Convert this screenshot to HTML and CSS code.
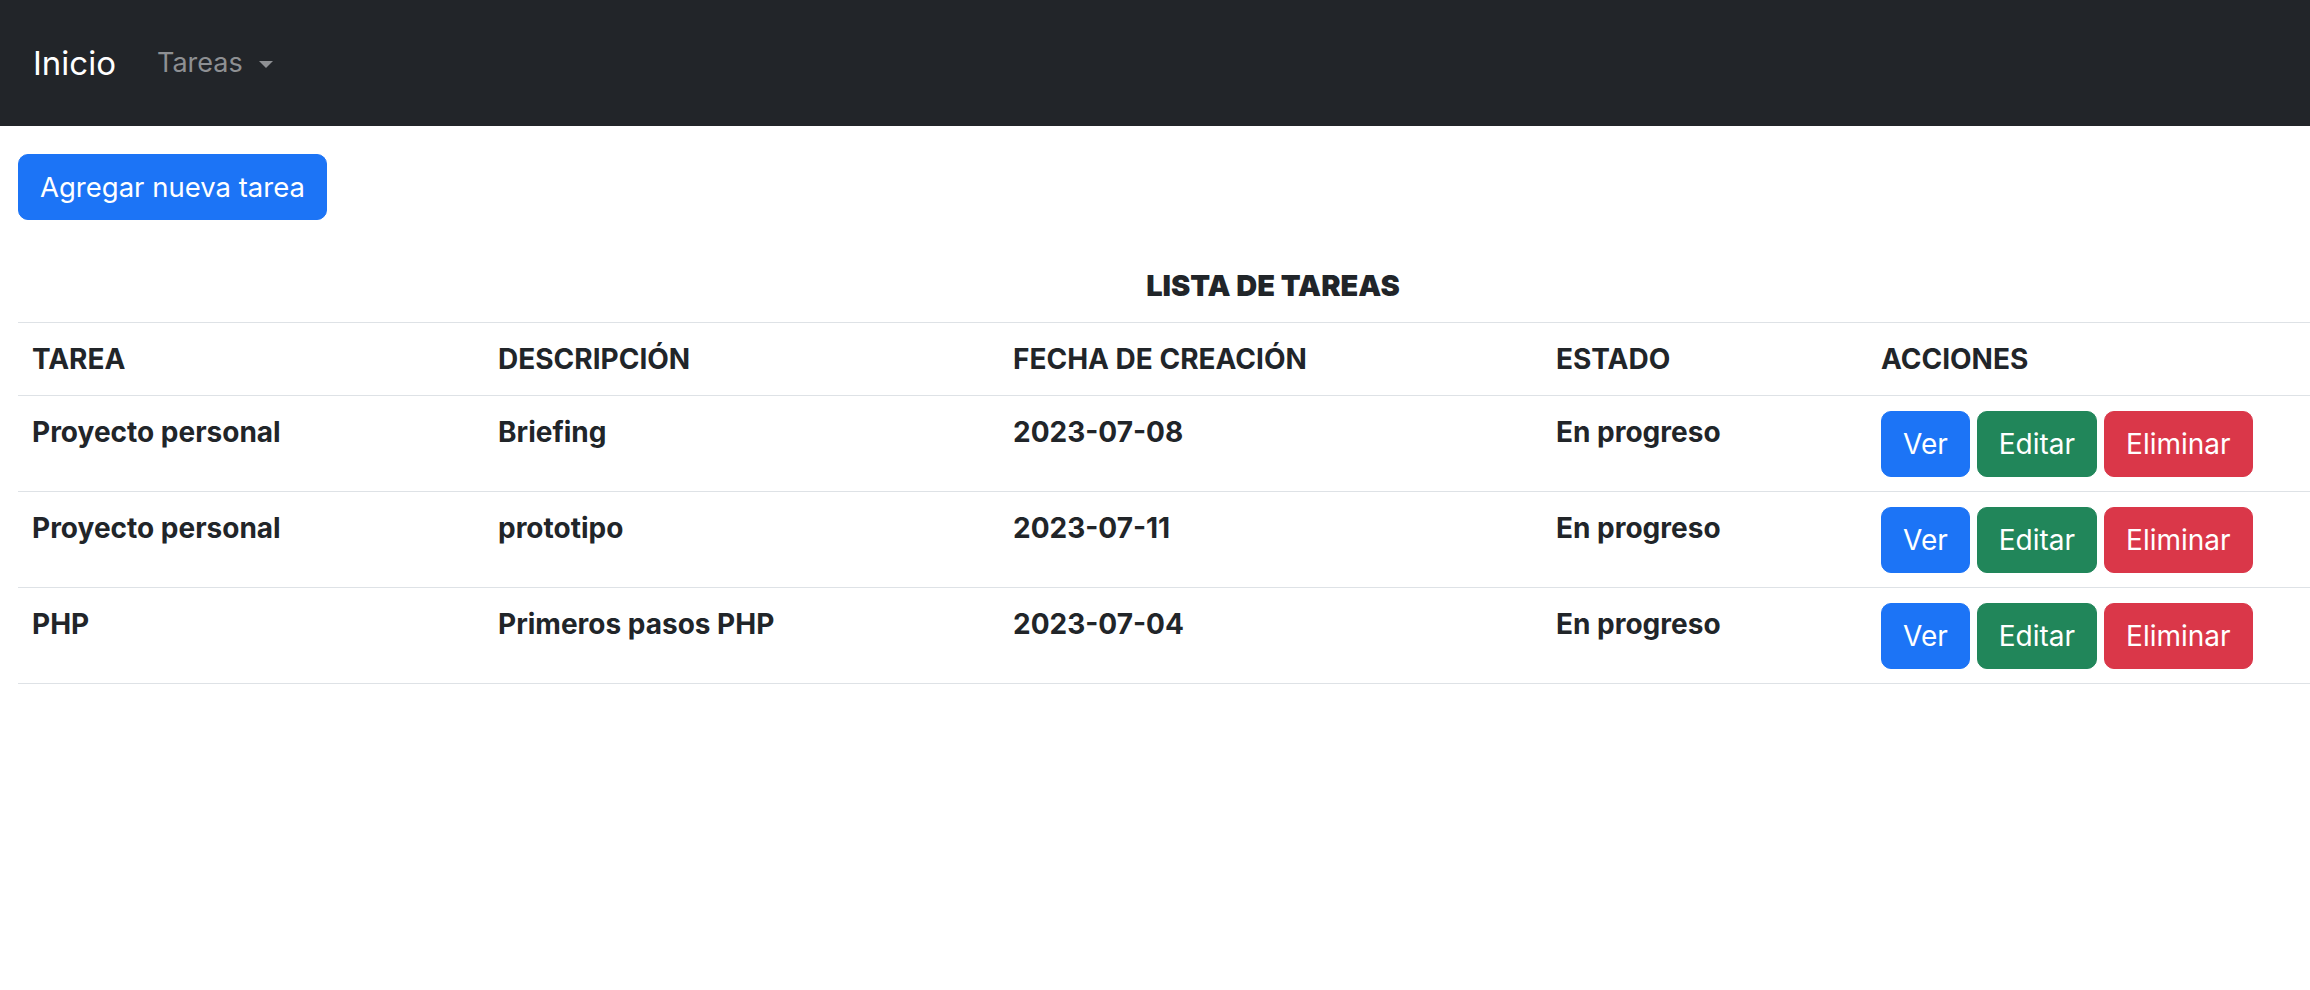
FILE: index.html
```html
<!DOCTYPE html>
<html lang="es">
<head>
<meta charset="utf-8">
<title>Lista de tareas</title>
<link rel="stylesheet" href="styles.css">
</head>
<body>
<nav class="navbar">
  <a class="brand" href="#">Inicio</a>
  <a class="nav-link dropdown" href="#">Tareas<span class="caret"></span></a>
</nav>
<main class="container">
  <a class="btn btn-primary btn-add" href="#">Agregar nueva tarea</a>
  <table class="table">
    <colgroup>
      <col class="c1"><col class="c2"><col class="c3"><col class="c4"><col class="c5">
    </colgroup>
    <thead>
      <tr><th class="caption" colspan="5">LISTA DE TAREAS</th></tr>
      <tr>
        <th>TAREA</th>
        <th>DESCRIPCIÓN</th>
        <th>FECHA DE CREACIÓN</th>
        <th>ESTADO</th>
        <th>ACCIONES</th>
      </tr>
    </thead>
    <tbody>
      <tr>
        <td>Proyecto personal</td>
        <td>Briefing</td>
        <td>2023-07-08</td>
        <td>En progreso</td>
        <td><div class="actions"><a class="btn btn-primary" href="#">Ver</a><a class="btn btn-success" href="#">Editar</a><a class="btn btn-danger" href="#">Eliminar</a></div></td>
      </tr>
      <tr>
        <td>Proyecto personal</td>
        <td>prototipo</td>
        <td>2023-07-11</td>
        <td>En progreso</td>
        <td><div class="actions"><a class="btn btn-primary" href="#">Ver</a><a class="btn btn-success" href="#">Editar</a><a class="btn btn-danger" href="#">Eliminar</a></div></td>
      </tr>
      <tr>
        <td>PHP</td>
        <td>Primeros pasos PHP</td>
        <td>2023-07-04</td>
        <td>En progreso</td>
        <td><div class="actions"><a class="btn btn-primary" href="#">Ver</a><a class="btn btn-success" href="#">Editar</a><a class="btn btn-danger" href="#">Eliminar</a></div></td>
      </tr>
    </tbody>
  </table>
</main>
</body>
</html>
```
FILE: styles.css
```css
html, body {
  margin: 0;
  padding: 0;
  background: #ffffff;
}
body {
  font-family: Inter, "Liberation Sans", sans-serif;
  font-size: 28px;
  line-height: 42px;
  color: #212529;
}
a { text-decoration: none; }

.navbar {
  height: 126px;
  background: #222529;
  display: flex;
  align-items: center;
  padding-left: 33px;
  box-sizing: border-box;
}
.brand {
  color: #ffffff;
  font-size: 33px;
  line-height: 50px;
  margin-right: 41px;
}
.nav-link {
  color: #8e9093;
  font-size: 27px;
  display: flex;
  align-items: center;
}
.caret {
  display: inline-block;
  width: 0;
  height: 0;
  border-top: 7px solid #8e9093;
  border-left: 7px solid transparent;
  border-right: 7px solid transparent;
  margin-left: 16px;
  margin-top: 2px;
}

.container {
  padding: 28px 0 0 18px;
}

.btn {
  display: inline-block;
  box-sizing: border-box;
  height: 66px;
  line-height: 64px;
  padding: 0 21px;
  border: 1px solid transparent;
  border-radius: 10px;
  color: #ffffff;
  font-size: 28px;
  font-weight: 400;
  white-space: nowrap;
}
.btn-primary { background: #1c74f6; border-color: #1c74f6; }
.btn-success { background: #21865a; border-color: #21865a; }
.btn-danger { background: #da3749; border-color: #da3749; }

.btn-add {
  font-size: 27.5px;
  margin-bottom: 31px;
}

.table {
  width: 100%;
  border-collapse: collapse;
  table-layout: fixed;
}
.c1 { width: 466px; }
.c2 { width: 515px; }
.c3 { width: 543px; }
.c4 { width: 325px; }
.c5 { width: auto; }

.table th, .table td {
  padding: 15px 14px;
  text-align: left;
  vertical-align: top;
  font-weight: 700;
  border-bottom: 1px solid #dee2e6;
}
.table th.caption {
  text-align: center;
  font-weight: 900;
  font-size: 29px;
  padding: 14px 14px 15px 232px;
}
.table td {
  padding: 15px 14px 14px;
  height: 66px;
}
.actions {
  display: flex;
  gap: 7px;
}
```
